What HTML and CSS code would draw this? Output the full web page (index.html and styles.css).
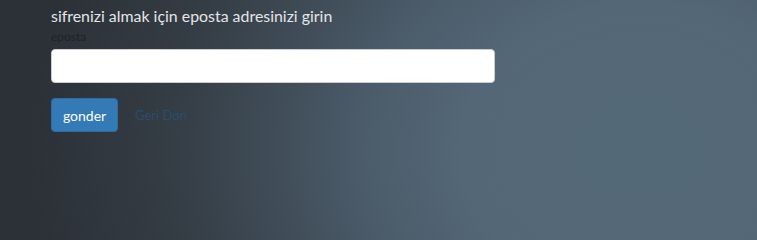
FILE: index.html
```html
<!DOCTYPE html>
<html lang="tr">
<head>
<meta charset="utf-8">
<link rel="stylesheet" href="styles.css">
</head>
<body>
<div class="page">
  <form class="reset-form">
    <h4 class="title">sifrenizi almak için eposta adresinizi girin</h4>
    <label class="label" for="email">eposta</label>
    <input class="input" id="email" type="text">
    <div class="actions">
      <button class="btn" type="button">gonder</button>
      <a class="back" href="#">Geri Don</a>
    </div>
  </form>
</div>
</body>
</html>
```
FILE: styles.css
```css
html {
  min-height: 100%;
  background: radial-gradient(ellipse 640px 520px at 640px 150px, #546978 0%, #536776 28%, #4b5b69 44%, #3e4a55 60%, #343c44 74%, #2c3138 95%) #2c3138;
}
body {
  margin: 0;
  padding: 0;
  font-family: "Lato", "Open Sans", sans-serif;
}
.page {
  padding: 6px 51px 0;
}
.reset-form {
  width: 444px;
  display: flex;
  flex-direction: column;
}
.title {
  margin: 0;
  font-size: 15.9px;
  font-weight: 400;
  line-height: 20px;
  color: #e4e6e8;
}
.label {
  margin-top: 4px;
  font-size: 12px;
  line-height: 14px;
  color: #222;
}
.input {
  margin-top: 5px;
  height: 34px;
  box-sizing: border-box;
  border: 1px solid #ccc;
  border-radius: 4px;
  background: #fff;
}
.actions {
  margin-top: 15px;
  display: flex;
  align-items: center;
  gap: 17px;
}
.btn {
  width: 67px;
  height: 34px;
  border: 1px solid #2e6da4;
  border-radius: 4px;
  background: #337ab7;
  color: #fff;
  font-family: inherit;
  font-size: 14px;
  padding: 0;
}
.back {
  color: #2a4d6e;
  text-decoration: none;
  font-size: 13px;
}
```
